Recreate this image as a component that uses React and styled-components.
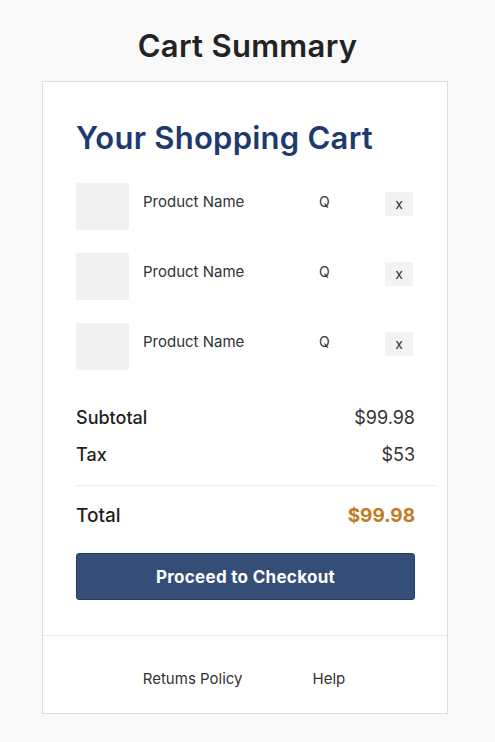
import React from "react";
import styled, { createGlobalStyle } from "styled-components";

const Global = createGlobalStyle`
  html, body { margin: 0; padding: 0; background: #f9f9f9; }
  body { font-family: Inter, "Open Sans", sans-serif; color: #222; }
`;

const Page = styled.div`
  width: 495px;
  height: 742px;
  display: flex;
  flex-direction: column;
  align-items: flex-start;
`;

const PageTitle = styled.h1`
  align-self: stretch;
  margin: 26px 0 0;
  height: 40px;
  line-height: 40px;
  text-align: center;
  font-size: 31px;
  font-weight: 600;
  color: #232323;
  letter-spacing: 0.3px;
`;

const Card = styled.section`
  margin: 15px 0 0 42px;
  width: 404px;
  background: #fff;
  border: 1px solid #dedede;
  display: flex;
  flex-direction: column;
`;

const Body = styled.div`
  padding: 36px 32px 35px 33px;
  display: flex;
  flex-direction: column;
`;

const Heading = styled.h2`
  margin: 0 0 25px;
  font-size: 31px;
  line-height: 40px;
  font-weight: 600;
  color: #1e3a6d;
  letter-spacing: 0.25px;
`;

const Items = styled.div`
  display: flex;
  flex-direction: column;
  gap: 23px;
`;

const Item = styled.div`
  display: grid;
  grid-template-columns: 53px 1fr 66px 30px;
  align-items: center;
  height: 47px;
`;

const Thumb = styled.div`
  width: 53px;
  height: 47px;
  background: #f1f1f1;
  border-radius: 2px;
`;

const Name = styled.span`
  padding-left: 14px;
  font-size: 15px;
  color: #333;
  margin-top: -10px;
`;

const Qty = styled.span`
  font-size: 14px;
  color: #333;
  margin-top: -10px;
`;

const Remove = styled.button`
  width: 28px;
  height: 24px;
  border: none;
  background: #f3f3f3;
  font-family: inherit;
  font-size: 14px;
  color: #333;
  padding: 0;
  margin-top: -6px;
  cursor: pointer;
`;

const Totals = styled.div`
  margin-top: 29px;
  display: flex;
  flex-direction: column;
`;

const Line = styled.div`
  display: flex;
  justify-content: space-between;
  align-items: center;
  height: 37px;
  font-size: ${(p) => (p.$total ? 19 : 18)}px;
  font-weight: 500;
  color: #1f1f1f;
`;

const Amount = styled.span`
  font-weight: ${(p) => (p.$accent ? 700 : 400)};
  color: ${(p) => (p.$accent ? "#c27c1f" : "#333")};
`;

const Divider = styled.hr`
  margin: 12px -22px 11px 0;
  border: none;
  border-top: 1px solid #eeeeee;
`;

const Checkout = styled.button`
  margin-top: 19px;
  height: 47px;
  background: #344e78;
  border: 1px solid #243d66;
  border-radius: 3px;
  color: #fff;
  font-family: inherit;
  font-size: 17px;
  font-weight: 700;
  letter-spacing: 0.3px;
  cursor: pointer;
`;

const Footer = styled.footer`
  border-top: 1px solid #ececec;
  height: 69px;
  padding: 8px 2px 0 0;
  display: flex;
  justify-content: center;
  align-items: center;
  gap: 70px;
`;

const FooterLink = styled.a`
  font-size: 15px;
  color: #333;
  text-decoration: none;
`;

const items = [1, 2, 3];

export default function App() {
  return (
    <>
      <Global />
      <Page>
        <PageTitle>Cart Summary</PageTitle>
        <Card>
          <Body>
            <Heading>Your Shopping Cart</Heading>
            <Items>
              {items.map((i) => (
                <Item key={i}>
                  <Thumb />
                  <Name>Product Name</Name>
                  <Qty>Q</Qty>
                  <Remove>x</Remove>
                </Item>
              ))}
            </Items>
            <Totals>
              <Line>
                <span>Subtotal</span>
                <Amount>$99.98</Amount>
              </Line>
              <Line>
                <span>Tax</span>
                <Amount>$53</Amount>
              </Line>
              <Divider />
              <Line $total>
                <span>Total</span>
                <Amount $accent>$99.98</Amount>
              </Line>
            </Totals>
            <Checkout>Proceed to Checkout</Checkout>
          </Body>
          <Footer>
            <FooterLink href="#">Retums Policy</FooterLink>
            <FooterLink href="#">Help</FooterLink>
          </Footer>
        </Card>
      </Page>
    </>
  );
}
